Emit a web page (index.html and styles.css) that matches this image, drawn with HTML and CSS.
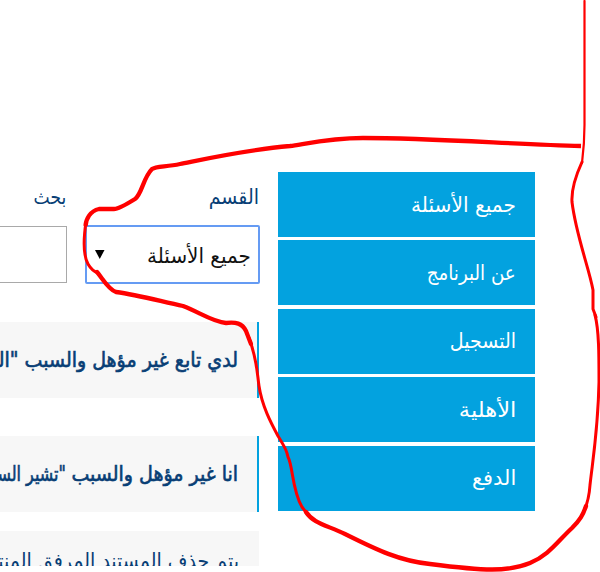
FILE: index.html
```html
<!DOCTYPE html>
<html lang="ar" dir="rtl">
<head>
<meta charset="utf-8">
<title>الأسئلة الشائعة</title>
<link rel="stylesheet" href="styles.css">
</head>
<body>
<div class="page">
  <nav class="sidebar">
    <a class="item"><span class="all">جميع الأسئلة</span></a>
    <a class="item"><span class="about">عن البرنامج</span></a>
    <a class="item"><span>التسجيل</span></a>
    <a class="item"><span class="eligibility">الأهلية</span></a>
    <a class="item"><span class="payment">الدفع</span></a>
  </nav>
  <main class="content">
    <div class="filters">
      <div class="field field-section">
        <div class="label"><span>القسم</span></div>
        <div class="select"><span class="all">جميع الأسئلة</span><svg width="10" height="9" viewBox="0 0 10 9"><path d="M0 0H9.5L4.75 9Z"/></svg></div>
      </div>
      <div class="field field-search">
        <div class="label"><span class="search">بحث</span></div>
        <div class="input"></div>
      </div>
    </div>
    <div class="question"><span>لدي تابع غير مؤهل والسبب "المستند</span></div>
    <div class="question"><span>انا غير مؤهل والسبب <b class="tail">"تشير السجلات</b></span></div>
    <div class="answer"><span>يتم حذف المستند المرفق المنتهي</span></div>
  </main>
</div>
<svg class="ink" width="600" height="572" viewBox="0 0 600 572">
  <path class="thin" d="M584.500 1V125Q584.500 143 582 163"/>
  <path class="thick butt" d="M581 146C510 144 430 138 363 138C330 138 305 144 290 146C245 150 205 159 180 164C166 167 156 166 152 169C143 178 142 194 135 199C127 204 119 209 114 209H99C90 211 86 219 85.500 226"/>
  <path class="mid" d="M86 222C83 242 83 255 88 264Q92 271 98 273"/>
  <path class="thick" d="M97 272C103 279 108 289 116 292C139 295 163 302 183 306C199 312 213 322 226 323C236 322 242 323 246 331L251 344"/>
  <path class="mid" d="M249 338C257 359 257 372 259 386C262 406 271 423 278 436C286 449 287 452 288 457C293 466 292 490 302 507L308 515"/>
  <path class="thick" d="M306 512C313 523 326 525 345 534C377 550 400 561 430 564C484 571 508 572 530 563C549 555 557 542 572 528C580 520 583 515 586 506"/>
  <path class="mid" d="M582 162Q571 186 572 202C576 235 589 268 593 290V309L596 317"/>
  <path class="mid" d="M595 315C599 330 599 355 599 382C598 430 593 458 590 485Q589 500 584 511"/>
</svg>
</body>
</html>
```
FILE: styles.css
```css
* { box-sizing: border-box; }
body {
  margin: 0;
  background: #fff;
  color: #083e75;
  font-family: "DejaVu Sans", sans-serif;
  font-size: 19px;
  overflow: hidden;
}
.page {
  display: flex;
  gap: 19px;
  height: 566px;
  padding: 172px 65px 0 0;
  overflow: hidden;
}
.page span {
  display: inline-block;
  white-space: nowrap;
  transform: scaleY(1.08);
  transform-origin: right center;
}
.page .all { transform: scale(1.06, 1.08); }
.page .select .all { transform: scale(1.05, 1.08); }
.page .about { transform: scale(.96, 1.08); }
.page .eligibility { transform: scale(1.19, 1.08); }
.page .payment { transform: scale(1.1, 1.08); }
.page .search { transform: scale(.9, 1.08); }
.tail {
  display: inline-block;
  font-weight: normal;
  transform: scaleX(.84);
  transform-origin: right center;
}
.sidebar {
  display: flex;
  flex: 0 0 257px;
  flex-direction: column;
  gap: 3.4px;
}
.item {
  display: flex;
  flex: 0 0 65px;
  align-items: center;
  padding: 0 19px 2px 0;
  background: #03a2df;
  color: #fff;
}
.content { flex: 0 0 259px; }
.filters { display: flex; gap: 18px; }
.field { flex: 0 0 175px; }
.field-section { margin-right: -1px; }
.label {
  display: flex;
  align-items: center;
  height: 53px;
  padding: 0 1px 5px 0;
}
.select {
  display: flex;
  align-items: center;
  justify-content: space-between;
  height: 59px;
  padding: 0 7px 0 8px;
  border: 2px solid #659bf3;
  border-radius: 2px;
  color: #111;
}
.input {
  height: 57px;
  margin-top: 1px;
  border: 1px solid #a9a9a9;
}
.question {
  display: flex;
  align-items: center;
  height: 76px;
  margin-top: 38px;
  padding: 0 19px 2px 0;
  border-right: 2px solid #03a2df;
  background: #f7f7f7;
  -webkit-text-stroke: .6px #083e75;
  overflow: hidden;
}
.answer {
  height: 60px;
  margin-top: 19px;
  padding: 18px 20px 0 0;
  background: #f7f7f7;
  overflow: hidden;
}
.ink {
  position: absolute;
  top: 0;
  left: 0;
  fill: none;
  stroke: #f00;
  stroke-linecap: round;
  stroke-linejoin: round;
}
.thin { stroke-width: 2.2; }
.mid { stroke-width: 3; }
.thick { stroke-width: 4.3; }
.butt { stroke-linecap: butt; }
```
